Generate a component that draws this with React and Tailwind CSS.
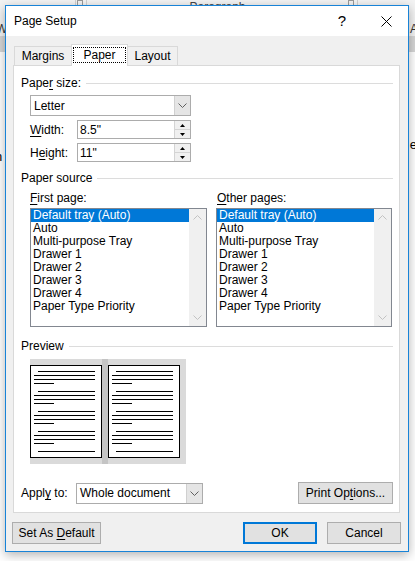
import React from 'react';

const ITEMS = ['Default tray (Auto)', 'Auto', 'Multi-purpose Tray', 'Drawer 1', 'Drawer 2', 'Drawer 3', 'Drawer 4', 'Paper Type Priority'];

function Chevron({ up = false, color = '#606060' }) {
  return (
    <svg width="9" height="5" viewBox="0 0 9 5">
      <path d={up ? 'M0.5 4.5 L4.5 0.5 L8.5 4.5' : 'M0.5 0.5 L4.5 4.5 L8.5 0.5'} fill="none" stroke={color} strokeWidth="1" />
    </svg>
  );
}

function U({ children }) {
  return <span className="underline decoration-1 underline-offset-[2px]">{children}</span>;
}

function GroupHeader({ children }) {
  return (
    <div className="flex items-center h-[14px] pl-[7px] pr-[6px]">
      <span className="leading-[14px] text-black">{children}</span>
      <div className="flex-1 h-px bg-[#dcdcdc] ml-[5px]" />
    </div>
  );
}

function Dropdown({ value, width }) {
  return (
    <div className={`flex h-[21px] border border-[#acacac] bg-white ${width}`}>
      <div className="flex-1 flex items-center pl-[3px] leading-[14px]">{value}</div>
      <div className="w-[16px] flex items-center justify-center bg-[#e5e5e5] border-l border-[#d0d0d0]">
        <Chevron />
      </div>
    </div>
  );
}

function Spin() {
  return (
    <div className="w-[16px] flex flex-col border-l border-[#d4d4d4] bg-[#f0f0f0]">
      <div className="flex-1 flex items-center justify-center border-b border-[#d4d4d4]">
        <svg width="5" height="3" viewBox="0 0 5 3"><path d="M0 3 L2.5 0 L5 3Z" fill="#000" /></svg>
      </div>
      <div className="flex-1 flex items-center justify-center">
        <svg width="5" height="3" viewBox="0 0 5 3"><path d="M0 0 L2.5 3 L5 0Z" fill="#000" /></svg>
      </div>
    </div>
  );
}

function SpinField({ label, value }) {
  return (
    <div className="flex items-center h-[19px] pl-[16px]">
      <div className="w-[47px] leading-[14px]">{label}</div>
      <div className="flex w-[114px] h-[19px] border border-[#acacac] bg-white">
        <div className="flex-1 flex items-center pl-[2px] leading-[14px]">{value}</div>
        <Spin />
      </div>
    </div>
  );
}

function ListBox({ width, rowWidth }) {
  return (
    <div className={`flex h-[119px] border border-[#828790] bg-white ${width}`}>
      <div className={`flex flex-col ${rowWidth}`}>
        {ITEMS.map((t, i) => (
          <div
            key={t}
            className={`h-[13px] leading-[13px] pl-[2px] whitespace-nowrap ${i === 0 ? 'bg-[#0078d7] text-white' : 'text-black'}`}
          >
            {t}
          </div>
        ))}
      </div>
      <div className="flex-1 flex flex-col items-center justify-between py-[6px] bg-[#f0f0f0]">
        <Chevron up color="#c2c2c2" />
        <Chevron color="#c2c2c2" />
      </div>
    </div>
  );
}

function Lines() {
  return (
    <div className="flex flex-col gap-[3px]">
      <div className="h-px bg-black ml-[4px] w-[57px]" />
      <div className="h-px bg-black w-[61px]" />
      <div className="h-px bg-black w-[61px]" />
      <div className="h-px bg-black w-[20px]" />
    </div>
  );
}

function PreviewPage() {
  return (
    <div className="w-[72px] h-[93px] mt-[6px] border border-black bg-white pt-[5px] pl-[3px] flex flex-col gap-[7px]">
      <Lines />
      <Lines />
      <Lines />
      <Lines />
      <div className="h-px bg-black ml-[4px] w-[57px]" />
    </div>
  );
}

function Button({ children, width, primary = false }) {
  return (
    <div
      className={`flex items-center justify-center h-[22px] bg-[#e1e1e1] leading-[14px] ${width} ${
        primary ? 'border-2 border-[#0078d7]' : 'border border-[#adadad]'
      }`}
    >
      <span className="whitespace-nowrap">{children}</span>
    </div>
  );
}

export default function App() {
  return (
    <div className="relative w-[415px] h-[561px] overflow-hidden bg-white text-[12px] text-black font-['Liberation_Sans',Arial,sans-serif]">
      {/* Word window behind the dialog */}
      <div className="h-[36px] bg-[#f3f3f3] flex flex-col">
        <div className="h-[6px] flex items-end overflow-hidden text-[#444]">
          <div className="w-[76px] h-[6px] border-r border-[#d0d0d0]" />
          <div className="w-[6px] h-[6px] border border-[#9a9a9a] ml-[1px]" />
          <div className="flex-1 text-center text-[12px] leading-[14px] -mb-[8px] border-l border-[#d0d0d0] ml-[3px]">Paragraph</div>
          <div className="w-[6px] h-[6px] border border-[#9a9a9a]" />
          <div className="w-[58px] border-l border-[#d0d0d0] ml-[3px] h-[6px]" />
        </div>
        <div className="flex justify-between pt-[16px] text-[12px] leading-[14px] text-[#333]">
          <span className="-ml-[4px]">W</span>
          <span className="-mr-[3px]">A</span>
        </div>
      </div>
      <div className="h-[16px] bg-[#d6d6d6]" />
      <div className="flex justify-between text-[13px] leading-[14px]">
        <div className="pt-[98px] -ml-[5px] flex flex-col">
          <span>n</span>
          <span>r</span>
        </div>
        <div className="pt-[86px] -mr-[2px]">
          <span>e</span>
        </div>
      </div>

      {/* Page Setup dialog */}
      <div className="absolute left-[5px] top-[5px] w-[404px] h-[547px] border border-[#1883d7] bg-[#f0f0f0] flex flex-col shadow-[0_3px_10px_rgba(0,0,0,0.3)]">
        <div className="h-[30px] bg-white flex items-center">
          <span className="pl-[8px] flex-1 leading-[14px]">Page Setup</span>
          <div className="w-[44px] flex justify-center text-[15px] leading-[16px]">?</div>
          <div className="w-[44px] flex justify-center">
            <svg width="11" height="11" viewBox="0 0 11 11">
              <path d="M0.5 0.5 L10.5 10.5 M10.5 0.5 L0.5 10.5" stroke="#000" strokeWidth="1" fill="none" />
            </svg>
          </div>
        </div>

        <div className="flex-1 flex flex-col pt-[8px]">
          {/* Tabs */}
          <div className="flex items-end h-[21px] pl-[8px]">
            <div className="w-[58px] h-[19px] border border-b-0 border-[#d9d9d9] flex items-center justify-center leading-[14px]">
              Margins
            </div>
            <div className="relative z-10 -ml-px w-[57px] h-[22px] -mb-px border border-b-0 border-[#d9d9d9] bg-white flex justify-center pt-[2px]">
              <span className="h-[16px] px-[9px] border border-dotted border-black leading-[14px]">Paper</span>
            </div>
            <div className="-ml-px w-[51px] h-[19px] border border-b-0 border-[#d9d9d9] flex items-center justify-center leading-[14px]">
              Layout
            </div>
          </div>

          {/* Tab panel */}
          <div className="ml-[7px] w-[387px] h-[448px] border border-[#d9d9d9] bg-white flex flex-col">
            <div className="mt-[10px]">
              <GroupHeader>
                Pape<U>r</U> size:
              </GroupHeader>
            </div>
            <div className="mt-[5px] pl-[16px]">
              <Dropdown value="Letter" width="w-[161px]" />
            </div>
            <div className="mt-[4px]">
              <SpinField label={<><U>W</U>idth:</>} value={'8.5"'} />
            </div>
            <div className="mt-[4px]">
              <SpinField label={<>H<U>e</U>ight:</>} value={'11"'} />
            </div>

            <div className="mt-[9px]">
              <GroupHeader>Paper source</GroupHeader>
            </div>
            <div className="mt-[6px] pl-[16px] flex gap-[9px]">
              <div className="flex flex-col">
                <div className="h-[14px] leading-[14px]">
                  <U>F</U>irst page:
                </div>
                <div className="mt-[3px]">
                  <ListBox width="w-[177px]" rowWidth="w-[158px]" />
                </div>
              </div>
              <div className="flex flex-col">
                <div className="h-[14px] leading-[14px] pl-px">
                  <U>O</U>ther pages:
                </div>
                <div className="mt-[3px]">
                  <ListBox width="w-[176px]" rowWidth="w-[157px]" />
                </div>
              </div>
            </div>

            <div className="mt-[12px]">
              <GroupHeader>Preview</GroupHeader>
            </div>
            <div className="mt-[6px] ml-[16px] w-[156px] h-[105px] bg-[#dadada] flex">
              <PreviewPage />
              <div className="w-[6px] h-full bg-[#c4c4c4]" />
              <PreviewPage />
            </div>

            <div className="mt-[18px] flex items-center pl-[7px] pr-[6px]">
              <div className="w-[55px] leading-[14px]">
                Appl<U>y</U> to:
              </div>
              <Dropdown value="Whole document" width="w-[127px]" />
              <div className="flex-1" />
              <Button width="w-[95px]">
                Print Op<U>t</U>ions...
              </Button>
            </div>
          </div>

          {/* Dialog buttons */}
          <div className="mt-[9px] flex items-center pl-[6px] pr-[7px]">
            <Button width="w-[89px]">
              Set As <U>D</U>efault
            </Button>
            <div className="flex-1" />
            <Button width="w-[74px]" primary>
              OK
            </Button>
            <div className="w-[10px]" />
            <Button width="w-[74px]">Cancel</Button>
          </div>
        </div>
      </div>
    </div>
  );
}
